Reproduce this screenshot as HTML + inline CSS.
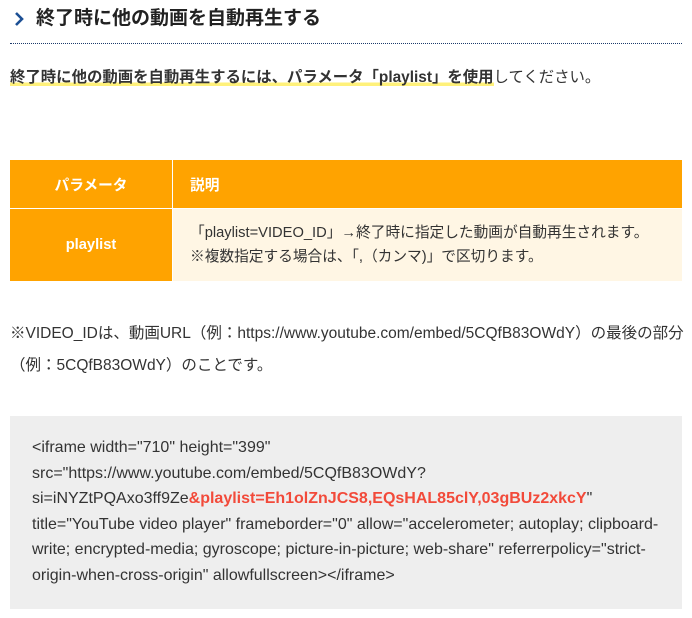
<!DOCTYPE html>
<html><head><meta charset="utf-8"><style>
body{margin:0;width:692px;height:618px;background:#fff;font-family:"Liberation Sans","Noto Sans CJK JP",sans-serif;color:#333;position:relative;overflow:hidden}
.a{position:absolute;white-space:nowrap}
h2{position:absolute;left:36px;top:6px;margin:0;font-size:19px;font-weight:bold;color:#222;line-height:26px}
.chev{position:absolute;left:13px;top:11px}
.line{position:absolute;left:10px;top:43px;width:672px;border-top:1px dotted #1c3a6b}
.p{left:10px;top:66px;font-size:15.4px;line-height:24px}
.hl{font-weight:bold;background:linear-gradient(transparent 80%,#fff17a 80%)}
table{position:absolute;left:10px;top:160px;width:672px;border-collapse:collapse;font-size:14.7px}
td{padding:0}
.h{background:#ffa300;color:#fff;font-weight:bold;height:48px}
.k{background:#ffa300;color:#fff;font-weight:bold;text-align:center;width:162px;border-right:1px solid #fff}
.v{background:#fff6e4;padding-left:17px;line-height:24px;height:72px}
.note{left:10px;top:318px;font-size:15.5px;line-height:32px;white-space:normal;width:682px}
.code{position:absolute;left:10px;top:416px;width:672px;height:193px;background:#eee}
.code div{position:absolute;left:22px;top:19px;width:650px;font-size:16px;line-height:25.6px;color:#333;white-space:nowrap}
.r{color:#f24a3a;font-weight:bold}
</style></head><body>
<svg class="chev" width="12" height="16" viewBox="0 0 12 16"><path d="M3 2 L9 8 L3 14" fill="none" stroke="#1c4f94" stroke-width="2.6"/></svg>
<h2>終了時に他の動画を自動再生する</h2>
<div class="line"></div>
<div class="a p"><span class="hl">終了時に他の動画を自動再生するには、パラメータ「playlist」を使用</span>してください。</div>
<table>
<tr><td class="h k" style="border-bottom:1px solid #fff">パラメータ</td><td class="h" style="padding-left:17px;border-bottom:1px solid #fff">説明</td></tr>
<tr><td class="k" style="height:72px">playlist</td><td class="v">「playlist=VIDEO_ID」→終了時に指定した動画が自動再生されます。<br>※複数指定する場合は、「,（カンマ)」で区切ります。</td></tr>
</table>
<div class="a note">※VIDEO_IDは、動画URL（例：https://www.youtube.com/embed/5CQfB83OWdY）の最後の部分（例：5CQfB83OWdY）のことです。</div>
<div class="code"><div>&lt;iframe width="710" height="399"<br>src="https://www.youtube.com/embed/5CQfB83OWdY?<br>si=iNYZtPQAxo3ff9Ze<span class="r">&amp;playlist=Eh1olZnJCS8,EQsHAL85clY,03gBUz2xkcY</span>"<br>title="YouTube video player" frameborder="0" allow="accelerometer; autoplay; clipboard-<br>write; encrypted-media; gyroscope; picture-in-picture; web-share" referrerpolicy="strict-<br>origin-when-cross-origin" allowfullscreen&gt;&lt;/iframe&gt;</div></div>
</body></html>
